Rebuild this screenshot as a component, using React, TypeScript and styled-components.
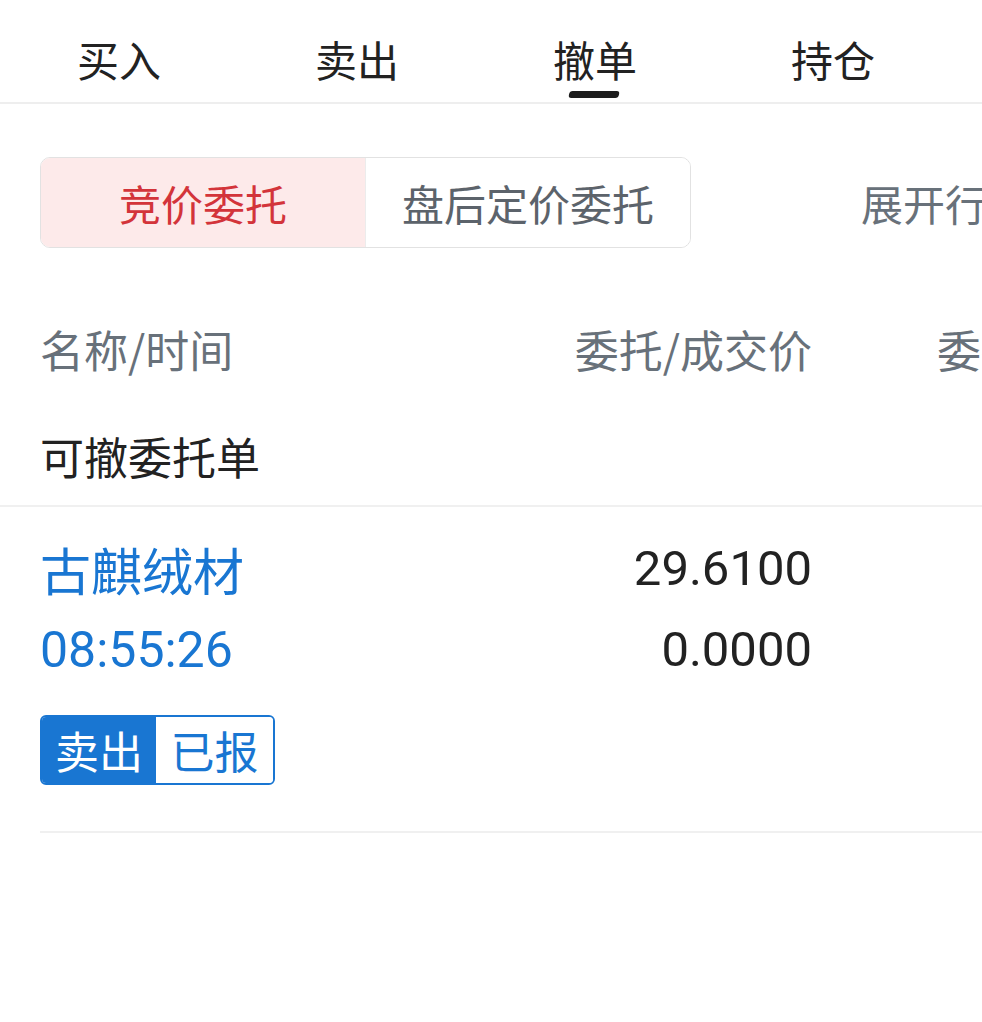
import React from 'react';
import styled, { createGlobalStyle } from 'styled-components';

const GlobalStyle = createGlobalStyle`
  html, body {
    margin: 0;
    padding: 0;
    background: #ffffff;
  }
  body {
    font-family: 'Noto Sans CJK SC', 'Noto Sans', sans-serif;
    color: #222222;
  }
`;

const Page = styled.div`
  width: 982px;
  height: 1022px;
  overflow: hidden;
  background: #ffffff;
`;

const TabBar = styled.div`
  display: flex;
  height: 102px;
  border-bottom: 2px solid #eeeeee;
  width: 1200px;
`;

const Tab = styled.div`
  position: relative;
  flex: 0 0 238px;
  display: flex;
  justify-content: center;
  padding-top: 34px;
  font-size: 42px;
  line-height: 50px;
  color: #222222;
`;

const Underline = styled.span`
  position: absolute;
  left: 50%;
  bottom: 4px;
  width: 50px;
  height: 7px;
  margin-left: -26px;
  background: #1c1c1c;
  border-radius: 3px;
  transform: skewX(-12deg);
`;

const FilterRow = styled.div`
  display: flex;
  align-items: center;
  padding: 53px 0 0 40px;
  width: 1200px;
`;

const Segment = styled.div`
  display: flex;
  height: 89px;
  border: 1px solid #e2e2e2;
  border-radius: 10px;
  overflow: hidden;
`;

const SegmentItem = styled.div<{ $active?: boolean }>`
  width: 324px;
  display: flex;
  align-items: center;
  justify-content: center;
  font-size: 42px;
  color: ${({ $active }) => ($active ? '#d3343a' : '#5c636b')};
  background: ${({ $active }) => ($active ? '#fdeaea' : '#ffffff')};
  & + & {
    border-left: 1px solid #ececec;
  }
`;

const Expand = styled.div`
  margin-left: 170px;
  font-size: 42px;
  color: #68717a;
  white-space: nowrap;
`;

const HeaderRow = styled.div`
  display: grid;
  grid-template-columns: 400px 372px 125px 300px;
  padding-left: 40px;
  width: 1237px;
  margin-top: 68px;
  height: 110px;
  align-items: start;
  color: #68717a;
  font-size: 44px;
  line-height: 66px;
`;

const HeadCell = styled.div<{ $align?: 'left' | 'right' }>`
  text-align: ${({ $align }) => $align || 'left'};
  white-space: nowrap;
`;

const SectionTitle = styled.div`
  padding-left: 40px;
  font-size: 44px;
  line-height: 60px;
  height: 79px;
  color: #222222;
  border-bottom: 2px solid #f0f0f0;
  width: 1200px;
`;

const OrderRow = styled.div`
  margin-left: 40px;
  padding: 32px 0 46px;
  border-bottom: 2px solid #f0f0f0;
  width: 1200px;
`;

const OrderGrid = styled.div`
  display: grid;
  grid-template-columns: 400px 372px;
  row-gap: 21px;
`;

const Name = styled.div`
  font-size: 51px;
  line-height: 60px;
  color: #1976d2;
`;

const Time = styled.div`
  font-family: Roboto, 'Noto Sans', sans-serif;
  font-size: 50px;
  line-height: 60px;
  color: #1976d2;
`;

const Price = styled.div`
  font-family: Roboto, 'Noto Sans', sans-serif;
  font-size: 49px;
  line-height: 60px;
  color: #222222;
  text-align: right;
`;

const Badge = styled.div`
  display: inline-flex;
  box-sizing: border-box;
  margin-top: 35px;
  height: 70px;
  border: 2px solid #1976d2;
  border-radius: 6px;
  overflow: hidden;
`;

const BadgePart = styled.span<{ $filled?: boolean }>`
  display: flex;
  align-items: center;
  justify-content: center;
  font-size: 44px;
  color: ${({ $filled }) => ($filled ? '#ffffff' : '#1976d2')};
  background: ${({ $filled }) => ($filled ? '#1976d2' : '#ffffff')};
  width: ${({ $filled }) => ($filled ? '114px' : '117px')};
`;

const tabs = ['买入', '卖出', '撤单', '持仓', '查询'];

const App: React.FC = () => {
  return (
    <Page>
      <GlobalStyle />
      <TabBar>
        {tabs.map((t) => (
          <Tab key={t}>
            {t}
            {t === '撤单' && <Underline />}
          </Tab>
        ))}
      </TabBar>

      <FilterRow>
        <Segment>
          <SegmentItem $active>竞价委托</SegmentItem>
          <SegmentItem>盘后定价委托</SegmentItem>
        </Segment>
        <Expand>展开行情</Expand>
      </FilterRow>

      <HeaderRow>
        <HeadCell>名称/时间</HeadCell>
        <HeadCell $align="right">委托/成交价</HeadCell>
        <div />
        <HeadCell>委托/成交量</HeadCell>
      </HeaderRow>

      <SectionTitle>可撤委托单</SectionTitle>

      <OrderRow>
        <OrderGrid>
          <Name>古麒绒材</Name>
          <Price>29.6100</Price>
          <Time>08:55:26</Time>
          <Price>0.0000</Price>
        </OrderGrid>
        <Badge>
          <BadgePart $filled>卖出</BadgePart>
          <BadgePart>已报</BadgePart>
        </Badge>
      </OrderRow>
    </Page>
  );
};

export default App;
